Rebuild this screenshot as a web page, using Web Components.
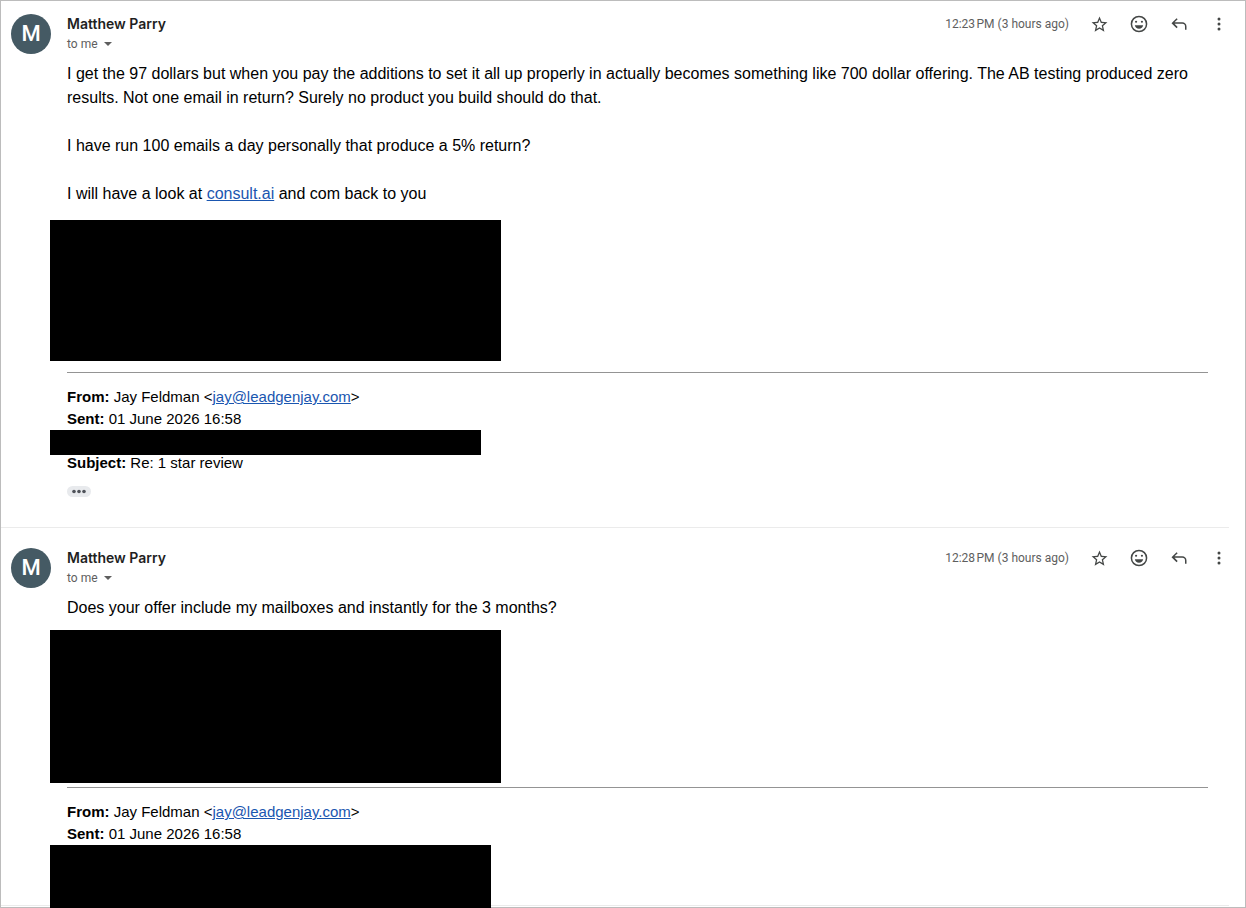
<!DOCTYPE html>
<html lang="en">
<head>
<meta charset="utf-8">
<meta name="viewport" content="width=device-width, initial-scale=1">
<title>Matthew Parry</title>
<style>
    body {
        margin: 0;
        background: #fff;
        color: #000;
        font-family: "Liberation Sans", Arial, sans-serif;
    }

    a {
        color: #1a56b0;
    }
</style>
</head>
<body>

<mail-thread>
    <mail-message sender="Matthew Parry" time="12:23&#8239;PM (3 hours ago)">
        <p>I get the 97 dollars but when you pay the additions to set it all up properly in actually becomes something like 700 dollar offering. The AB testing produced zero results. Not one email in return? Surely no product you build should do that.</p>
        <p>I have run 100 emails a day personally that produce a 5% return?</p>
        <p>I will have a look at <a href="#consult">consult.ai</a> and com back to you</p>
        <redacted-block slot="signature" style="--width: 451px; --height: 141px"></redacted-block>
        <quoted-header slot="quote" sent="01 June 2026 16:58" subject="Re: 1 star review">
            <redacted-block style="--width: 431px; --height: 25px"></redacted-block>
        </quoted-header>
        <show-trimmed slot="trimmed"></show-trimmed>
    </mail-message>

    <mail-message sender="Matthew Parry" time="12:28&#8239;PM (3 hours ago)" compact>
        <p>Does your offer include my mailboxes and instantly for the 3 months?</p>
        <redacted-block slot="signature" style="--width: 451px; --height: 153px"></redacted-block>
        <quoted-header slot="quote" sent="01 June 2026 16:58">
            <redacted-block style="--width: 441px; --height: 63px"></redacted-block>
        </quoted-header>
    </mail-message>
</mail-thread>

<script>
function attach(element, html) {
    const template = document.createElement('template')
    template.innerHTML = html

    const shadow = element.attachShadow({mode: 'open'})
    shadow.appendChild(template.content.cloneNode(true))

    return shadow
}

const icons = {
    star: '<svg width="19" height="19" viewBox="0 0 24 24"><path d="M22 9.24l-7.19-.62L12 2 9.19 8.63 2 9.24l5.46 4.73L5.82 21 12 17.27 18.18 21l-1.63-7.03L22 9.24zM12 15.4l-3.76 2.27 1-4.28-3.32-2.88 4.38-.38L12 6.1l1.71 4.04 4.38.38-3.32 2.88 1 4.28L12 15.4z"/></svg>',
    react: '<svg width="20" height="20" viewBox="0 0 24 24"><path fill-rule="evenodd" d="M12 2a10 10 0 1 0 0 20 10 10 0 0 0 0-20zm0 18.2a8.2 8.2 0 1 1 0-16.4 8.2 8.2 0 0 1 0 16.4z"/><circle cx="8.5" cy="9.3" r="1.3"/><circle cx="15.5" cy="9.3" r="1.3"/><path d="M7 13.5h10a5.1 5.1 0 0 1-10 0z"/></svg>',
    reply: '<svg width="20" height="20" viewBox="0 0 24 24"><path d="M19.2 19v-4a3.2 3.2 0 0 0-3.2-3.2H6.63l3.78 3.79L9.1 17 3 11l6.1-6 1.31 1.41L6.63 10H16a5 5 0 0 1 5 5v4z"/></svg>',
    more: '<svg width="20" height="20" viewBox="0 0 24 24"><circle cx="12" cy="6" r="1.8"/><circle cx="12" cy="12" r="1.8"/><circle cx="12" cy="18" r="1.8"/></svg>'
}

class IconButton extends HTMLElement {
    constructor() {
        super()

        attach(this, `
<style>
    :host {
        display: block;
    }

    button {
        display: flex;
        align-items: center;
        justify-content: center;
        width: 20px;
        height: 20px;
        padding: 0;
        border: 0;
        background: none;
        cursor: pointer;
    }

    svg {
        fill: #444746;
    }
</style>
<button type="button" aria-label="${this.getAttribute('label')}">${icons[this.getAttribute('icon')]}</button>
`)
    }
}

// Black bar drawn over private details, it hangs out to the left of the text
class RedactedBlock extends HTMLElement {
    constructor() {
        super()

        attach(this, `
<style>
    :host {
        display: block;
        margin-left: -17px;
        width: var(--width);
        max-width: 100%;
        height: var(--height);
        background: #000;
    }
</style>
`)
    }
}

class ShowTrimmed extends HTMLElement {
    constructor() {
        super()

        attach(this, `
<style>
    :host {
        display: block;
        padding: 12px 0 30px;
    }

    button {
        display: flex;
        align-items: center;
        justify-content: center;
        width: 24px;
        height: 11px;
        padding: 0;
        border: 0;
        border-radius: 6px;
        background: #e8eaed;
    }

    svg {
        fill: #50535a;
    }
</style>
<button type="button" aria-label="Show trimmed content">
    <svg width="14" height="5" viewBox="0 0 14 5"><circle cx="2" cy="2.5" r="1.8"/><circle cx="7" cy="2.5" r="1.8"/><circle cx="12" cy="2.5" r="1.8"/></svg>
</button>
`)
    }
}

class QuotedHeader extends HTMLElement {
    constructor() {
        super()

        const subject = this.getAttribute('subject')

        attach(this, `
<style>
    :host {
        display: block;
        font-size: 15px;
        line-height: 22px;
    }

    hr {
        height: 1px;
        margin: 0 0 13px;
        border: 0;
        background: #949494;
    }

    a {
        color: #1a56b0;
    }

    ::slotted(redacted-block) {
        margin-bottom: -3px;
    }
</style>
<hr>
<div><b>From:</b> Jay Feldman &lt;<a href="mailto:jay@leadgenjay.com">jay@leadgenjay.com</a>&gt;</div>
<div><b>Sent:</b> ${this.getAttribute('sent')}</div>
<slot></slot>
${subject ? `<div><b>Subject:</b> ${subject}</div>` : ''}
`)
    }
}

class MailMessage extends HTMLElement {
    constructor() {
        super()

        const sender = this.getAttribute('sender')

        attach(this, `
<style>
    :host {
        display: flex;
        gap: 16px;
        margin-right: 16px;
        padding: 20px 0 0 10px;
        border-bottom: 1px solid #ebebeb;
        --signature-top: 14px;
        --signature-bottom: 11px;
    }

    :host(:first-child) {
        padding-top: 13px;
    }

    :host([compact]) {
        --signature-top: 10px;
        --signature-bottom: 4px;
    }

    .avatar {
        flex: none;
        width: 40px;
        height: 40px;
        border-radius: 50%;
        background: #455a64;
        color: #fff;
        font: 500 22px/40px Roboto, sans-serif;
        text-align: center;
    }

    .main {
        flex: 1;
        min-width: 0;
    }

    header {
        display: flex;
        align-items: flex-start;
        gap: 20px;
        margin-bottom: 8px;
        color: #5e5e5e;
        font: 12px/20px Roboto, sans-serif;
    }

    .who {
        flex: 1;
    }

    h3 {
        margin: 0;
        color: #1f1f1f;
        font: 600 14px/20px Inter, sans-serif;
    }

    .to {
        display: flex;
        align-items: center;
        gap: 6px;
        padding: 0;
        border: 0;
        background: none;
        color: inherit;
        font: inherit;
    }

    .to svg {
        fill: #5e5e5e;
    }

    .content {
        padding-right: 21px;
        font-size: 16px;
        line-height: 24px;
    }

    ::slotted(p) {
        margin: 0 0 24px;
    }

    ::slotted(p:last-of-type) {
        margin: 0;
    }

    ::slotted([slot=signature]) {
        margin-top: var(--signature-top);
        margin-bottom: var(--signature-bottom);
    }
</style>
<div class="avatar">${sender[0]}</div>
<div class="main">
    <header>
        <div class="who">
            <h3>${sender}</h3>
            <button class="to" type="button">to me <svg width="8" height="4" viewBox="0 0 8 4"><path d="M0 0h8L4 4z"/></svg></button>
        </div>
        <time>${this.getAttribute('time')}</time>
        <icon-button icon="star" label="Star"></icon-button>
        <icon-button icon="react" label="Add reaction"></icon-button>
        <icon-button icon="reply" label="Reply"></icon-button>
        <icon-button icon="more" label="More"></icon-button>
    </header>
    <div class="content">
        <slot></slot>
        <slot name="signature"></slot>
        <slot name="quote"></slot>
        <slot name="trimmed"></slot>
    </div>
</div>
`)
    }
}

class MailThread extends HTMLElement {
    constructor() {
        super()

        attach(this, `
<style>
    :host {
        display: block;
        box-sizing: border-box;
        min-height: 100vh;
        padding-bottom: 1px;
        border: 1px solid #bcbcbc;
    }
</style>
<slot></slot>
`)
    }
}

customElements.define('icon-button', IconButton)
customElements.define('redacted-block', RedactedBlock)
customElements.define('show-trimmed', ShowTrimmed)
customElements.define('quoted-header', QuotedHeader)
customElements.define('mail-message', MailMessage)
customElements.define('mail-thread', MailThread)
</script>
</body>
</html>
